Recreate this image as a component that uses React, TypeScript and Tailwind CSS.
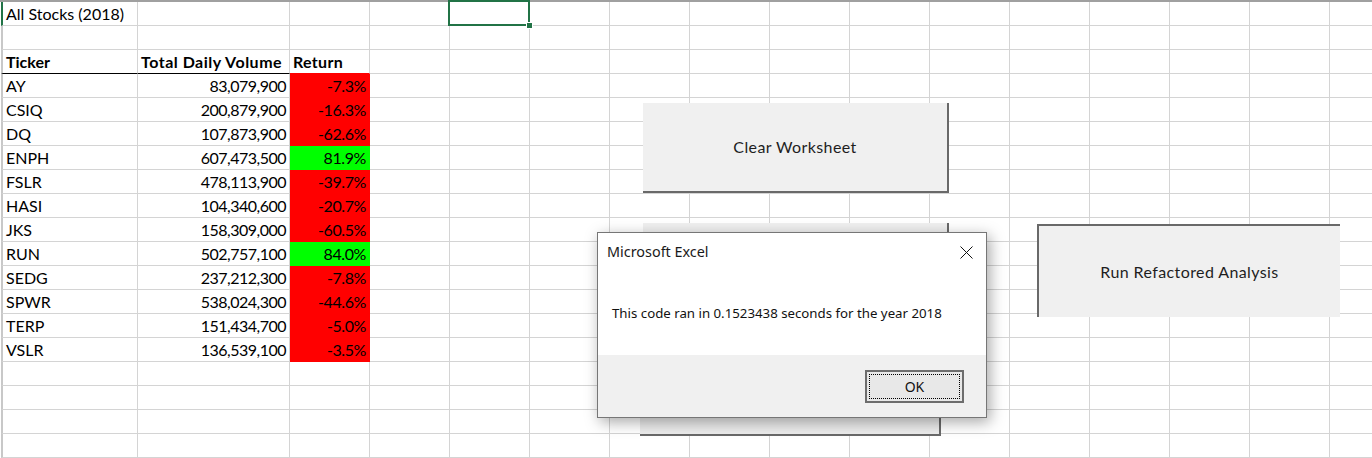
import React from "react";

type Row = { t: string; v: string; r: string; up: boolean };

const data: Row[] = [
  { t: "AY", v: "83,079,900", r: "-7.3%", up: false },
  { t: "CSIQ", v: "200,879,900", r: "-16.3%", up: false },
  { t: "DQ", v: "107,873,900", r: "-62.6%", up: false },
  { t: "ENPH", v: "607,473,500", r: "81.9%", up: true },
  { t: "FSLR", v: "478,113,900", r: "-39.7%", up: false },
  { t: "HASI", v: "104,340,600", r: "-20.7%", up: false },
  { t: "JKS", v: "158,309,000", r: "-60.5%", up: false },
  { t: "RUN", v: "502,757,100", r: "84.0%", up: true },
  { t: "SEDG", v: "237,212,300", r: "-7.8%", up: false },
  { t: "SPWR", v: "538,024,300", r: "-44.6%", up: false },
  { t: "TERP", v: "151,434,700", r: "-5.0%", up: false },
  { t: "VSLR", v: "136,539,100", r: "-3.5%", up: false },
];

const extraCols = Array.from({ length: 13 }, (_, i) => i);

function Rest() {
  return (
    <>
      {extraCols.map((i) => (
        <div key={i} className="w-[80px] shrink-0 border-r border-b border-[#d4d4d4]" />
      ))}
    </>
  );
}

function SheetRow({
  a,
  b,
  c,
  kind,
  first,
}: {
  a?: string;
  b?: string;
  c?: string;
  kind?: "header" | "red" | "green";
  first?: boolean;
}) {
  const header = kind === "header";
  const fill =
    kind === "red"
      ? "bg-[#ff0000] border-[#ff0000]"
      : kind === "green"
      ? "bg-[#00ff00] border-[#00ff00]"
      : header
      ? "border-[#ff0000]"
      : "border-[#d4d4d4]";
  return (
    <div className="flex h-[24px]">
      <div
        className={`w-[137px] shrink-0 border-l-2 border-r border-b pl-[3px] leading-[23px] whitespace-nowrap ${
          first ? "border-l-[#217346]" : "border-l-[#c8c8c8]"
        } ${header ? "border-b-black border-r-[#d4d4d4] font-bold" : "border-r-[#d4d4d4] border-b-[#d4d4d4]"}`}
      >
        {a}
      </div>
      <div
        className={`w-[152px] shrink-0 border-r border-b leading-[23px] whitespace-nowrap ${
          header
            ? "border-b-black border-r-[#d4d4d4] font-bold pl-[3px] text-left tracking-[0.5px]"
            : "border-[#d4d4d4] pr-[3px] text-right tracking-[-0.5px]"
        }`}
      >
        {b}
      </div>
      <div
        className={`w-[80px] shrink-0 border-r border-b leading-[23px] whitespace-nowrap ${fill} ${
          header ? "font-bold pl-[3px] text-left border-r-[#d4d4d4] tracking-[0.3px]" : "pr-[3px] text-right tracking-[-0.4px]"
        }`}
      >
        {c}
      </div>
      <Rest />
    </div>
  );
}

export default function App() {
  return (
    <div
      className="relative w-[1372px] h-[458px] overflow-hidden bg-white text-[16px] text-black"
      style={{ fontFamily: "Lato, 'Open Sans', sans-serif" }}
    >
      <div className="border-t-2 border-[#a0a0a0] pl-[1px]">
        <SheetRow a="All Stocks (2018)" first />
        <SheetRow />
        <SheetRow a="Ticker" b="Total Daily Volume" c="Return" kind="header" />
        {data.map((d) => (
          <SheetRow key={d.t} a={d.t} b={d.v} c={d.r} kind={d.up ? "green" : "red"} />
        ))}
        <SheetRow />
        <SheetRow />
        <SheetRow />
        <SheetRow />
      </div>

      {/* selected cell */}
      <div className="absolute left-[448px] top-0 w-[82px] h-[26px] border-2 border-[#217346]" />
      <div className="absolute left-[526px] top-[22px] w-[7px] h-[7px] bg-[#217346] border border-white" />

      {/* Clear Worksheet button */}
      <div className="absolute left-[643px] top-[103px] w-[306px] h-[90px] bg-[#f0f0f0] border-r-2 border-b-2 border-[#696969] flex items-center justify-center text-[#1e1e1e] tracking-[0.4px]">
        Clear Worksheet
      </div>

      {/* hidden buttons behind dialog */}
      <div className="absolute left-[643px] top-[223px] w-[306px] h-[90px] bg-[#f0f0f0] border-r-2 border-b-2 border-[#696969]" />
      <div className="absolute left-[640px] top-[345px] w-[301px] h-[91px] bg-[#ececec] border-r-2 border-b-2 border-[#696969]" />

      {/* Run Refactored Analysis */}
      <div className="absolute left-[1037px] top-[224px] w-[303px] h-[93px] bg-[#f0f0f0] border-l-2 border-t-2 border-[#696969] flex items-center justify-center text-[#1e1e1e] tracking-[0.4px]">
        Run Refactored Analysis
      </div>

      {/* Dialog */}
      <div
        className="absolute left-[597px] top-[232px] w-[390px] h-[186px] bg-white border border-[#767676] shadow-[3px_4px_14px_rgba(0,0,0,0.35)] flex flex-col"
        style={{ fontFamily: "'Noto Sans', 'Open Sans', sans-serif" }}
      >
        <div className="flex items-center justify-between h-[38px] pl-[9px] pr-[13px]">
          <span className="text-[14.4px] text-[#1a1a1a]">Microsoft Excel</span>
          <svg width="13" height="13" viewBox="0 0 13 13" className="mt-[1px]">
            <path d="M0.5 0.5 L12.5 12.5 M12.5 0.5 L0.5 12.5" stroke="#111" strokeWidth="1" fill="none" />
          </svg>
        </div>
        <div className="flex-1 bg-white pl-[14px] pt-[33px] text-[13.25px] text-[#111]">
          This code ran in 0.1523438 seconds for the year 2018
        </div>
        <div className="h-[62px] bg-[#f0f0f0] flex items-start justify-end pr-[22px] pt-[15px]">
          <div className="w-[99px] h-[33px] border-2 border-[#6d6d6d] bg-[#e8e8e8] p-[2px]">
            <div className="w-full h-full border border-dotted border-black flex items-center justify-center text-[14px] text-[#111]">
              OK
            </div>
          </div>
        </div>
      </div>
    </div>
  );
}
